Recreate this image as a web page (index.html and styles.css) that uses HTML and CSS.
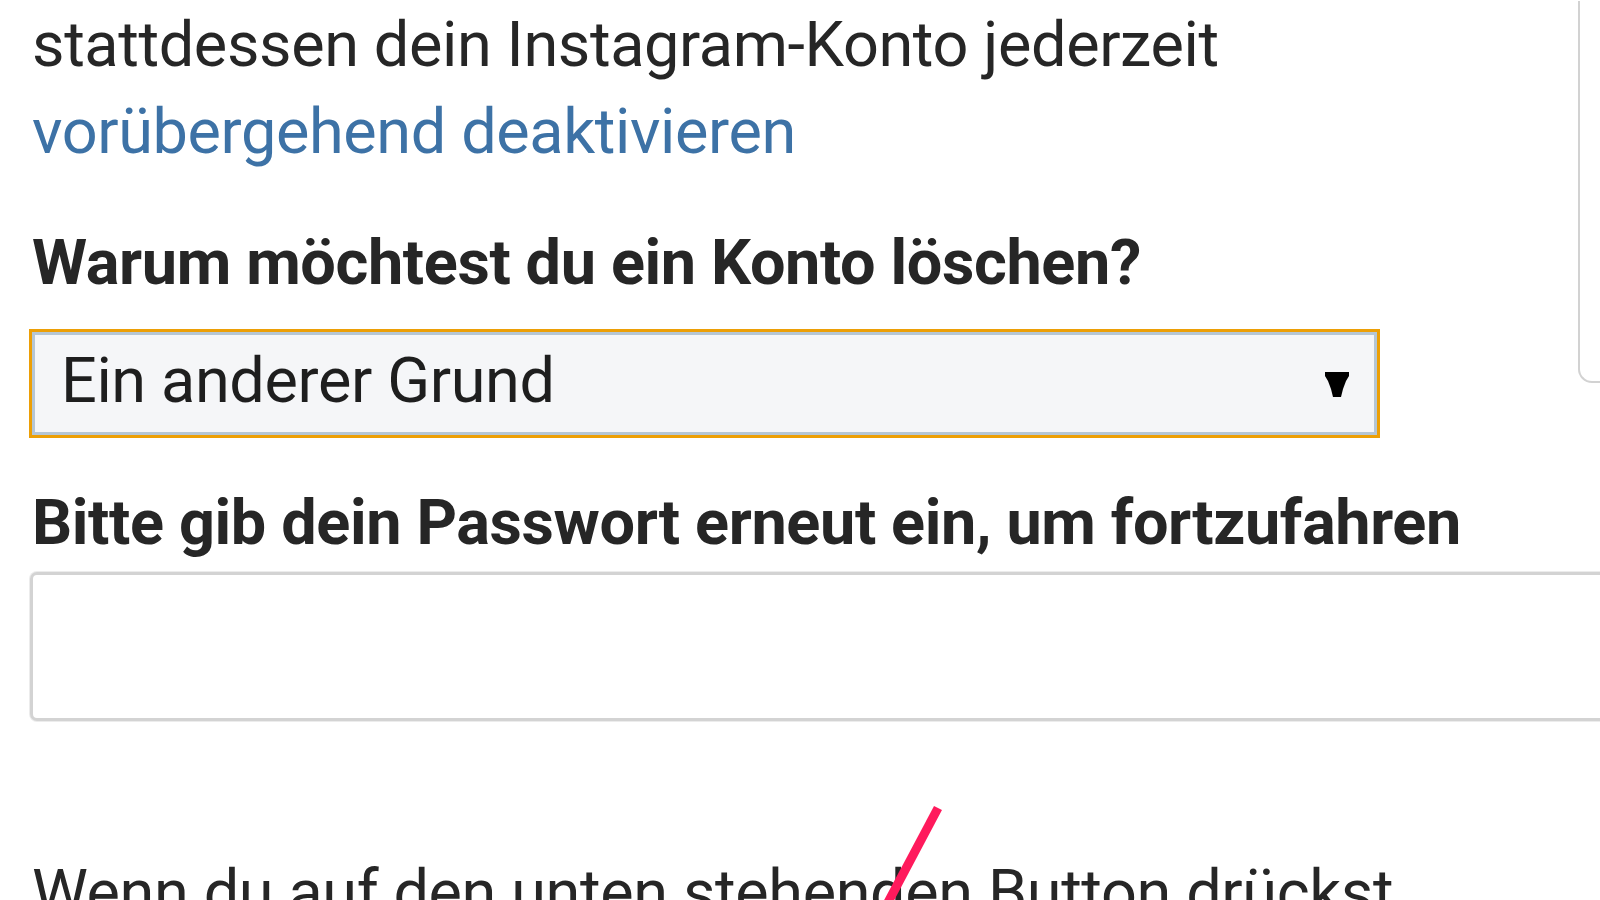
FILE: index.html
```html
<!DOCTYPE html>
<html lang="de">
<head>
<meta charset="utf-8">
<title>Konto löschen</title>
<link rel="stylesheet" href="styles.css">
</head>
<body>
<div class="page">
  <aside class="side-card"></aside>
  <p class="intro">stattdessen dein Instagram-Konto jederzeit<br><a class="link" href="#">vorübergehend deaktivieren</a></p>

  <h2 class="label">Warum möchtest du ein Konto löschen?</h2>
  <div class="select">
    <span class="select-value">Ein anderer Grund</span>
    <svg class="select-arrow" width="24" height="25" viewBox="0 0 24 25" aria-hidden="true">
      <polygon points="0,0 24,0 24,4 21,9 18,17 16,25 8,25 6,17 3,9 0,4" fill="#000"/>
    </svg>
  </div>

  <h2 class="label label-second">Bitte gib dein Passwort erneut ein, um fortzufahren</h2>
  <input class="password" type="password" aria-label="Passwort">

  <p class="notice">Wenn du auf den unten stehenden Button drückst</p>

  <svg class="annotation" width="70" height="110" viewBox="0 0 70 110" aria-hidden="true">
    <line x1="58" y1="8" x2="5" y2="108" stroke="#ff1a5c" stroke-width="9" stroke-linecap="butt"/>
  </svg>
</div>
</body>
</html>
```

FILE: styles.css
```css
html, body {
  margin: 0;
  padding: 0;
  background: #ffffff;
  height: 900px;
  overflow: hidden;
}

body {
  font-family: Roboto, "Liberation Sans", Arial, sans-serif;
  color: #262626;
}

.page {
  position: relative;
  width: 1600px;
  box-sizing: border-box;
  padding: 1px 0 0 32px;
}

.side-card {
  float: right;
  width: 60px;
  height: 380px;
  margin-right: -40px;
  border-left: 2px solid #d2d2d2;
  border-bottom: 2px solid #d2d2d2;
  border-bottom-left-radius: 14px;
  box-sizing: content-box;
}

.intro {
  margin: 0;
  font-size: 63px;
  line-height: 87px;
  letter-spacing: -0.38px;
  white-space: nowrap;
}

.link {
  color: #3d72a6;
  text-decoration: none;
}

.label {
  margin: 44px 0 0;
  font-size: 63px;
  line-height: 87px;
  letter-spacing: -0.38px;
  font-weight: 700;
  white-space: nowrap;
}

.select {
  margin-top: 26px;
  width: 1345px;
  height: 103px;
  box-sizing: border-box;
  border: 3px solid #b5c6d4;
  outline: 3px solid #ec9f06;
  background: #f5f6f8;
  display: flex;
  align-items: center;
  justify-content: space-between;
  padding: 0 25px 0 26px;
}

.select-value {
  font-size: 63px;
  line-height: 87px;
  letter-spacing: -0.38px;
  margin-bottom: 6px;
  color: #1e1e1e;
}

.select-arrow {
  display: block;
  margin-top: 2px;
}

.label-second {
  margin-top: 44px;
}

.password {
  display: block;
  margin: 6px 0 0 -2px;
  width: 1640px;
  height: 149px;
  box-sizing: border-box;
  border: 3px solid #d3d3d3;
  border-radius: 7px;
  box-shadow: 0 0 0 1px #ececec;
  background: #ffffff;
  font-size: 40px;
  padding: 0 20px;
  outline: none;
}

.notice {
  margin: 128px 0 0;
  font-size: 63px;
  line-height: 87px;
  letter-spacing: -0.38px;
  white-space: nowrap;
}

.annotation {
  position: absolute;
  left: 880px;
  top: 800px;
}
```
